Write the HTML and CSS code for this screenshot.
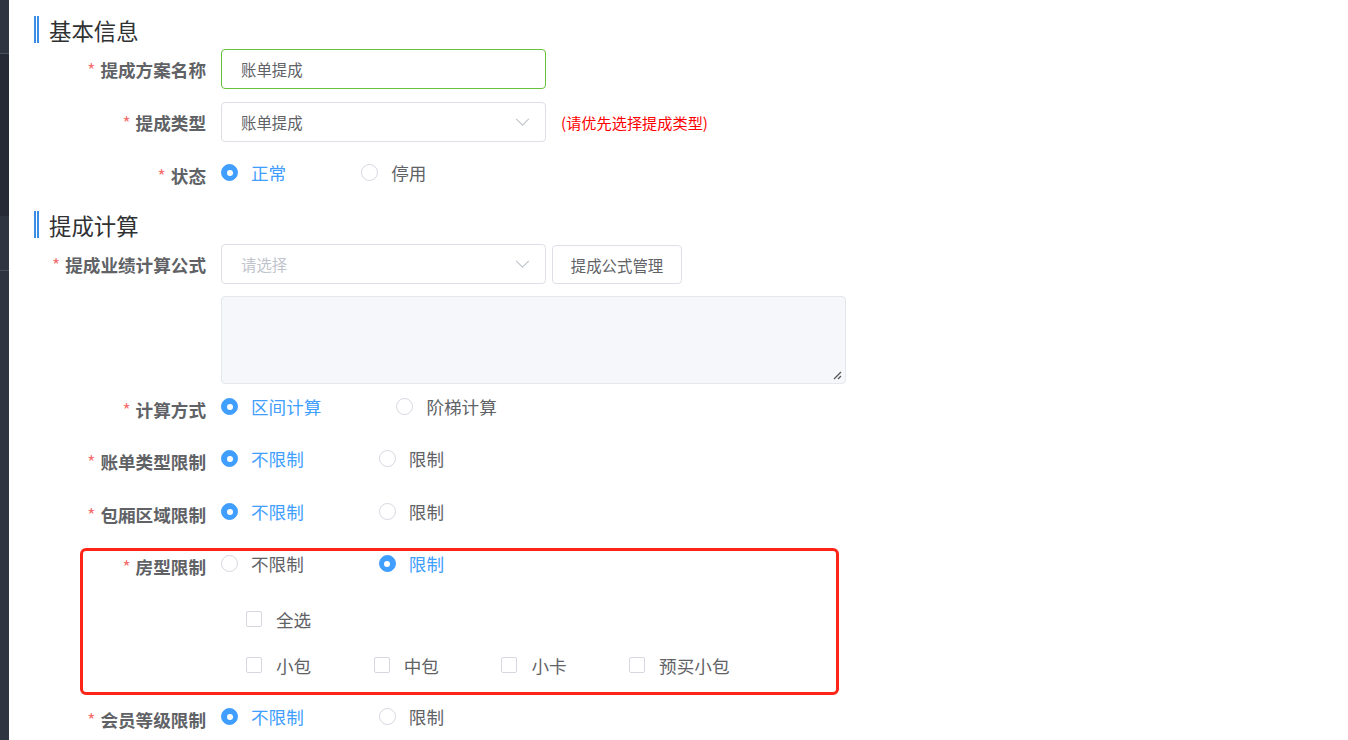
FILE: index.html
```html
<!DOCTYPE html>
<html lang="zh">
<head>
<meta charset="utf-8">
<title>提成方案</title>
<link rel="stylesheet" href="styles.css">
</head>
<body>
<div class="sidebar">
  <div class="sb-seg sb-a"></div>
  <div class="sb-seg sb-dark"></div>
  <div class="sb-seg sb-b"></div>
  <div class="sb-seg sb-rest"></div>
</div>
<main class="main">
  <div class="section-title t1">基本信息</div>

  <div class="form-item m6">
    <label class="label"><span class="req">*</span>提成方案名称</label>
    <div class="content">
      <div class="input focused">账单提成</div>
    </div>
  </div>

  <div class="form-item m13">
    <label class="label"><span class="req">*</span>提成类型</label>
    <div class="content">
      <div class="input select">账单提成<svg class="arrow" viewBox="0 0 16 10" width="15" height="9"><polyline points="1,1 8,8 15,1" fill="none" stroke="#c0c4cc" stroke-width="1.2"/></svg></div>
      <span class="hint">(请优先选择提成类型)</span>
    </div>
  </div>

  <div class="form-item m13">
    <label class="label"><span class="req">*</span>状态</label>
    <div class="content radios">
      <span class="radio checked"><span class="dot"></span><span class="rtext">正常</span></span>
      <span class="radio"><span class="dot"></span><span class="rtext">停用</span></span>
    </div>
  </div>

  <div class="section-title t2">提成计算</div>

  <div class="form-item m6">
    <label class="label"><span class="req">*</span>提成业绩计算公式</label>
    <div class="content">
      <div class="input select placeholder">请选择<svg class="arrow" viewBox="0 0 16 10" width="15" height="9"><polyline points="1,1 8,8 15,1" fill="none" stroke="#c0c4cc" stroke-width="1.2"/></svg></div>
      <button class="btn">提成公式管理</button>
    </div>
  </div>

  <div class="form-item m12 auto">
    <div class="label"></div>
    <div class="content">
      <div class="textarea">
        <svg class="resize" viewBox="0 0 10 10" width="10" height="10"><line x1="9" y1="2" x2="2" y2="9" stroke="#555" stroke-width="1.2"/><line x1="9" y1="6" x2="6" y2="9" stroke="#555" stroke-width="1.2"/></svg>
      </div>
    </div>
  </div>

  <div class="form-item m5">
    <label class="label"><span class="req">*</span>计算方式</label>
    <div class="content radios">
      <span class="radio checked"><span class="dot"></span><span class="rtext">区间计算</span></span>
      <span class="radio"><span class="dot"></span><span class="rtext">阶梯计算</span></span>
    </div>
  </div>

  <div class="form-item m12">
    <label class="label"><span class="req">*</span>账单类型限制</label>
    <div class="content radios">
      <span class="radio checked"><span class="dot"></span><span class="rtext">不限制</span></span>
      <span class="radio"><span class="dot"></span><span class="rtext">限制</span></span>
    </div>
  </div>

  <div class="form-item m13">
    <label class="label"><span class="req">*</span>包厢区域限制</label>
    <div class="content radios">
      <span class="radio checked"><span class="dot"></span><span class="rtext">不限制</span></span>
      <span class="radio"><span class="dot"></span><span class="rtext">限制</span></span>
    </div>
  </div>

  <div class="form-item m12">
    <label class="label"><span class="req">*</span>房型限制</label>
    <div class="content radios">
      <span class="radio"><span class="dot"></span><span class="rtext">不限制</span></span>
      <span class="radio checked"><span class="dot"></span><span class="rtext">限制</span></span>
    </div>
  </div>
  <div class="check-block">
    <div class="check-row">
      <span class="check"><span class="box"></span><span class="ctext">全选</span></span>
    </div>
    <div class="check-row m6">
      <span class="check"><span class="box"></span><span class="ctext">小包</span></span>
      <span class="check"><span class="box"></span><span class="ctext">中包</span></span>
      <span class="check"><span class="box"></span><span class="ctext">小卡</span></span>
      <span class="check"><span class="box"></span><span class="ctext">预买小包</span></span>
    </div>
  </div>

  <div class="form-item m14">
    <label class="label"><span class="req">*</span>会员等级限制</label>
    <div class="content radios">
      <span class="radio checked"><span class="dot"></span><span class="rtext">不限制</span></span>
      <span class="radio"><span class="dot"></span><span class="rtext">限制</span></span>
    </div>
  </div>

  <div class="highlight"></div>
</main>
</body>
</html>
```

FILE: styles.css
```css
* { box-sizing: border-box; }
html, body { margin: 0; padding: 0; height: 740px; overflow: hidden; }
body {
  display: flex;
  background: #fff;
  font-family: "Noto Sans CJK SC", "Noto Sans", sans-serif;
  color: #606266;
}
.sidebar {
  width: 9px;
  flex: none;
  display: flex;
  flex-direction: column;
  background: #2f3441;
}
.sb-a { height: 54px; background: #2f3441; border-bottom: 1px solid #4a505c; }
.sb-dark { height: 162px; background: #262a36; }
.sb-b { height: 55px; background: #2f3441; border-bottom: 1px solid #4a505c; }
.sb-rest { flex: 1; background: #2f3441; }

.main {
  flex: 1;
  padding-left: 25px;
}
.section-title {
  height: 27px;
  display: flex;
  align-items: center;
  border-left: 5px double #3a8ee6;
  padding-left: 10px;
  font-size: 22.4px;
  color: #303133;
}
.t1 { margin-top: 16px; }
.t2 { margin-top: 16px; }

.form-item {
  display: flex;
  align-items: center;
  height: 40px;
}
.form-item.auto { height: auto; align-items: flex-start; }
.m5 { margin-top: 5px; }
.m6 { margin-top: 6px; }
.m12 { margin-top: 12px; }
.m13 { margin-top: 13px; }
.m14 { margin-top: 14px; }

.label {
  width: 187px;
  flex: none;
  text-align: right;
  padding-right: 15px;
  font-size: 17.6px;
  font-weight: bold;
  color: #606266;
  padding-top: 1px;
}
.req { color: #f56c6c; font-weight: normal; margin-right: 5px; }

.content {
  display: flex;
  align-items: center;
}
.input {
  width: 325px;
  height: 40px;
  border: 1px solid #dcdfe6;
  border-radius: 4px;
  padding-left: 19px;
  font-size: 15.4px;
  color: #606266;
  display: flex;
  align-items: center;
  position: relative;
}
.input.focused { border-color: #67c23a; }
.input.placeholder { color: #c0c4cc; }
.arrow { position: absolute; right: 15px; top: 15px; }
.hint {
  margin-left: 15px;
  color: #ff0000;
  font-size: 15.2px;
}
.btn {
  margin-left: 6px;
  width: 130px;
  height: 39px;
  margin-top: 1px;
  border: 1px solid #dcdfe6;
  border-radius: 4px;
  background: #fff;
  color: #606266;
  font-family: inherit;
  font-size: 15.4px;
  padding: 0;
}
.textarea {
  width: 625px;
  height: 88px;
  border: 1px solid #e4e7ed;
  border-radius: 4px;
  background: #f5f7fa;
  position: relative;
}
.resize { position: absolute; right: 3px; bottom: 3px; }

.radios { padding-bottom: 5px; }
.radio {
  display: inline-flex;
  align-items: center;
  margin-right: 75px;
  font-size: 17.6px;
  color: #606266;
}
.radio .dot {
  width: 17px;
  height: 17px;
  border: 1px solid #d5d8e0;
  border-radius: 50%;
  background: #fff;
  margin-right: 13px;
  position: relative;
  flex: none;
}
.radio.checked .dot { background: #409eff; border-color: #409eff; }
.radio.checked .dot::after {
  content: "";
  position: absolute;
  width: 6px;
  height: 6px;
  border-radius: 50%;
  background: #fff;
  left: 50%;
  top: 50%;
  transform: translate(-50%, -50%);
}
.radio.checked .rtext { color: #409eff; }

.check-block { padding-left: 212px; margin-top: 13px; }
.check-row { height: 40px; display: flex; align-items: center; }
.check {
  display: inline-flex;
  align-items: center;
  margin-right: 62.5px;
  font-size: 17.6px;
  color: #606266;
}
.check .box {
  width: 16px;
  height: 16px;
  border: 1px solid #d5d8e0;
  border-radius: 2px;
  background: #fff;
  margin-right: 14px;
  flex: none;
}

.highlight {
  position: absolute;
  left: 80px;
  top: 548px;
  width: 759px;
  height: 147px;
  border: 3.5px solid #ff2418;
  border-radius: 6px;
  pointer-events: none;
}
```
